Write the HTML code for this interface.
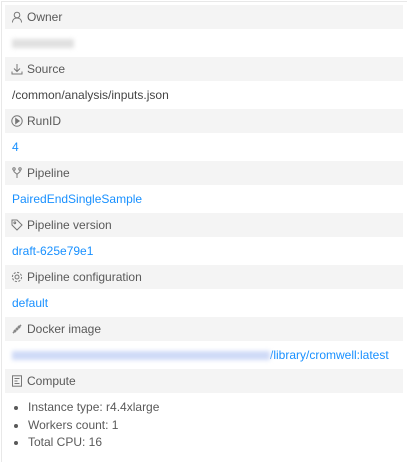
<!DOCTYPE html><html><head><style>
body{margin:0;width:407px;height:461px;background:#fff;font-family:"Liberation Sans",sans-serif;font-size:12px;overflow:hidden}
.wrap{position:absolute;left:1px;top:1px;width:406px;height:460px;border-top:1px solid #e8e8e8;border-left:1px solid #e8e8e8}
.h{position:absolute;left:5px;width:398px;height:24px;background:#f4f4f4;color:#595959;line-height:24px}
.h span{position:absolute;left:22px}
.h svg{position:absolute;left:6px;top:6px}
.v{position:absolute;left:12px;line-height:28px;height:28px;color:#1890ff}
.blur{display:inline-block;background:#cfdaf7;filter:blur(2px);height:9px;vertical-align:middle}
ul{position:absolute;left:0;top:399px;margin:0;padding:0 0 0 28px;color:#595959;line-height:17.5px}
</style></head><body><div class="wrap"></div>
<div class="h" style="top:5px"><svg width="12" height="12" viewBox="0 0 12 12" fill="none" stroke="#777"><circle cx="6" cy="4" r="2.8"/><path d="M1.5 11.5c0-3 2-4.5 4.5-4.5s4.5 1.5 4.5 4.5"/></svg><span>Owner</span></div>
<div class="v" style="top:29px"><span class="blur" style="width:62px;background:#e0e0e0"></span></div>
<div class="h" style="top:57px"><svg width="12" height="12" viewBox="0 0 12 12" fill="none" stroke="#777"><path d="M6 1v7M3 5.5l3 3 3-3M1 8.5v2.5h10V8.5"/></svg><span>Source</span></div>
<div class="v" style="top:81px;color:#444">/common/analysis/inputs.json</div>
<div class="h" style="top:109px"><svg width="12" height="12" viewBox="0 0 12 12" fill="none" stroke="#777"><circle cx="6" cy="6" r="5.2"/><path d="M4.7 3.5v5l3.5-2.5z" fill="#777"/></svg><span>RunID</span></div>
<div class="v" style="top:133px">4</div>
<div class="h" style="top:161px"><svg width="12" height="12" viewBox="0 0 12 12" fill="none" stroke="#777"><circle cx="3" cy="2" r="1.2"/><circle cx="9" cy="2" r="1.2"/><path d="M3 3.2v1.5l3 2.5 3-2.5V3.2M6 7.2V11"/></svg><span>Pipeline</span></div>
<div class="v" style="top:185px">PairedEndSingleSample</div>
<div class="h" style="top:213px"><svg width="12" height="12" viewBox="0 0 12 12" fill="none" stroke="#777"><path d="M1 1h5l5 5-5 5-5-5z"/><circle cx="3.8" cy="3.8" r="0.9"/></svg><span>Pipeline version</span></div>
<div class="v" style="top:237px">draft-625e79e1</div>
<div class="h" style="top:265px"><svg width="12" height="12" viewBox="0 0 12 12" fill="none" stroke="#777"><circle cx="6" cy="6" r="2"/><circle cx="6" cy="6" r="4.6" stroke-dasharray="2.2 1.4"/></svg><span>Pipeline configuration</span></div>
<div class="v" style="top:289px">default</div>
<div class="h" style="top:317px"><svg width="12" height="12" viewBox="0 0 12 12" fill="none" stroke="#888" stroke-width="1.6"><path d="M2 10l8-8M3 7l2 2M5 5l2 2M7 3l2 2"/></svg><span>Docker image</span></div>
<div class="v" style="top:341px"><span class="blur" style="width:258px"></span>/library/cromwell:latest</div>
<div class="h" style="top:369px"><svg width="12" height="12" viewBox="0 0 12 12" fill="none" stroke="#777"><rect x="1.5" y="0.8" width="9" height="10.4"/><path d="M3.5 3.5h5M3.5 6h3M3.5 8.5h5"/></svg><span>Compute</span></div>
<ul><li>Instance type: r4.4xlarge</li><li>Workers count: 1</li><li>Total CPU: 16</li></ul>
</body></html>
